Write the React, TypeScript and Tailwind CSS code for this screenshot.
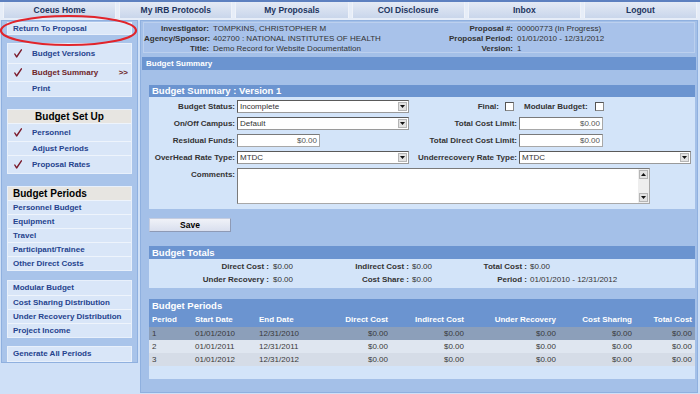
import React from "react";

const link = "text-[8px] font-bold text-[#25438e] leading-none whitespace-nowrap";

function Check() {
  return (
    <svg width="8" height="9" viewBox="0 0 8 9" className="shrink-0">
      <path d="M0.8 5 L2.6 8 L7.4 0.8" fill="none" stroke="#7a1a2b" strokeWidth="1.4" strokeLinecap="round" strokeLinejoin="round" />
    </svg>
  );
}

function Arrow({ up }: { up?: boolean }) {
  return (
    <div className="w-[9px] h-[9px] bg-[#e2e2e2] border border-[#b5b5b5] flex items-center justify-center shrink-0">
      <svg width="5" height="3" viewBox="0 0 5 3">
        <path d={up ? "M0 3 L2.5 0 L5 3 Z" : "M0 0 L5 0 L2.5 3 Z"} fill="#111" />
      </svg>
    </div>
  );
}

function Select({ value, w }: { value: string; w: string }) {
  return (
    <div className={`${w} h-[13px] bg-white border border-[#9a9a9a] border-t-[#5a5a5a] border-l-[#5a5a5a] flex items-center pl-[2px] pr-[1px]`}>
      <span className="flex-1 text-[8px] text-[#333] leading-none">{value}</span>
      <Arrow />
    </div>
  );
}

function Input({ w }: { w: string }) {
  return (
    <div className={`${w} h-[13px] bg-white border border-[#a8a8a8] border-t-[#7a7a7a] border-l-[#7a7a7a] flex items-center justify-end pr-[2px]`}>
      <span className="text-[8px] text-[#555] leading-none">$0.00</span>
    </div>
  );
}

function Box({ children, mt }: { children: React.ReactNode; mt: string }) {
  return <div className={`${mt} bg-[#d9e6f8] border border-[#e8f0fb] flex flex-col`}>{children}</div>;
}

function LRow({ label, h, check, active, arrow, plain }: { label: string; h: string; check?: boolean; active?: boolean; arrow?: boolean; plain?: boolean }) {
  return (
    <div className={`${h} flex items-center border-t border-[#eef4fc] first:border-t-0 ${plain ? "pl-[5px]" : "pl-[6px]"}`}>
      {!plain && <div className="w-[8px] shrink-0">{check && <Check />}</div>}
      <span className={`text-[8px] font-bold leading-none whitespace-nowrap ${plain ? "" : "ml-[10px]"} ${active ? "text-[#6e2528]" : "text-[#25438e]"}`}>{label}</span>
      {arrow && <span className="ml-auto mr-[3px] text-[8px] font-bold text-[#6e2528] leading-none">&gt;&gt;</span>}
    </div>
  );
}

const navItems = ["Coeus Home", "My IRB Protocols", "My Proposals", "COI Disclosure", "Inbox", "Logout"];

const lbl = "text-[8px] font-bold text-[#333] leading-none whitespace-nowrap";
const tl = "text-[8px] font-bold text-[#333] whitespace-nowrap text-right";

const periods = [
  ["1", "01/01/2010", "12/31/2010", "bg-[#8c9fba]"],
  ["2", "01/01/2011", "12/31/2011", "bg-[#dfe6f0]"],
  ["3", "01/01/2012", "12/31/2012", "bg-[#d5dce7]"],
];

const cols = "grid grid-cols-[43px_64px_64px_71px_76px_92px_76px_60px]";

export default function App() {
  return (
    <div className="relative w-[700px] h-[394px] overflow-hidden bg-[#cfe0f7] font-['Liberation_Sans',Arial,sans-serif] text-[#333]">
      {/* top nav */}
      <div className="h-[20px] flex gap-[3px] px-[3px] pb-[2px] bg-[#e6edf8] border-t-[2px] border-[#5d80bf]">
        {navItems.map((n) => (
          <div key={n} className="flex-1 h-[16px] flex items-center justify-center bg-gradient-to-b from-[#e4eaf5] to-[#c9d6eb] border-x border-[#eef2f9]">
            <span className="text-[8.5px] font-bold text-[#1d355f] leading-none">{n}</span>
          </div>
        ))}
      </div>

      <div className="flex items-start">
        {/* left panel */}
        <div className="ml-[1px] w-[137px] h-[343px] bg-[#a9c4ea] border border-[#8fb0df] px-[5px] pt-[1px] flex flex-col">
          <div className="h-[18px] bg-[#dce8f8] border border-[#e8f0fb] flex items-center pl-[5px]">
            <span className={link}>Return To Proposal</span>
          </div>
          <Box mt="mt-[8px]">
            <LRow label="Budget Versions" h="h-[19px]" check />
            <LRow label="Budget Summary" h="h-[18px]" check active arrow />
            <LRow label="Print" h="h-[15px]" />
          </Box>
          <Box mt="mt-[12px]">
            <div className="h-[13px] bg-[#e7e5e1] flex items-center justify-center">
              <span className="text-[10px] font-bold text-black leading-none">Budget Set Up</span>
            </div>
            <LRow label="Personnel" h="h-[18px]" check />
            <LRow label="Adjust Periods" h="h-[14px]" />
            <LRow label="Proposal Rates" h="h-[18px]" check />
          </Box>
          <Box mt="mt-[12px]">
            <div className="h-[13px] bg-[#e7e5e1] flex items-center pl-[5px]">
              <span className="text-[10px] font-bold text-black leading-none">Budget Periods</span>
            </div>
            {["Personnel Budget", "Equipment", "Travel", "Participant/Trainee", "Other Direct Costs"].map((t) => (
              <LRow key={t} label={t} h="h-[14px]" plain />
            ))}
          </Box>
          <Box mt="mt-[9px]">
            {["Modular Budget", "Cost Sharing Distribution", "Under Recovery Distribution", "Project Income"].map((t) => (
              <LRow key={t} label={t} h="h-[14px]" plain />
            ))}
          </Box>
          <Box mt="mt-[8px]">
            <LRow label="Generate All Periods" h="h-[14px]" plain />
          </Box>
        </div>

        {/* right panel */}
        <div className="ml-[2px] w-[558px] h-[373px] bg-[#a4c0e8] border border-[#8fb0df] pt-[1px] flex flex-col">
          <div className="mx-[2px] h-[31px] border border-[#bcd0ee] bg-[#a8c2ea] grid grid-cols-[65px_232px_64px_1fr] gap-x-[4px] content-start pt-[1px] text-[8px] leading-[10px]">
            <span className={tl}>Investigator:</span>
            <span className="whitespace-nowrap">TOMPKINS, CHRISTOPHER M</span>
            <span className={tl}>Proposal #:</span>
            <span className="whitespace-nowrap">00000773 (In Progress)</span>
            <span className={tl}>Agency/Sponsor:</span>
            <span className="whitespace-nowrap">402700 : NATIONAL INSTITUTES OF HEALTH</span>
            <span className={tl}>Proposal Period:</span>
            <span className="whitespace-nowrap">01/01/2010 - 12/31/2012</span>
            <span className={tl}>Title:</span>
            <span className="whitespace-nowrap">Demo Record for Website Documentation</span>
            <span className={tl}>Version:</span>
            <span className="whitespace-nowrap">1</span>
          </div>
          <div className="mt-[4px] mx-[1px] h-[13px] bg-[#6b94d0] flex items-center pl-[4px]">
            <span className="text-[8px] font-bold text-white leading-none">Budget Summary</span>
          </div>

          <div className="pl-[8px] pr-[2px] flex flex-col">
            {/* Budget Summary : Version 1 */}
            <div className="mt-[15px] flex flex-col">
              <div className="h-[12px] bg-[#6b94d0] flex items-center pl-[3px]">
                <span className="text-[9.5px] font-bold text-white leading-none">Budget Summary : Version 1</span>
              </div>
              <div className="bg-[#d3e4f9] pt-[3px] pb-[5px] grid grid-cols-[86px_172px_106px_1fr] gap-x-[2px] gap-y-[4px]">
                <span className={`${lbl} text-right self-center`}>Budget Status:</span>
                <Select value="Incomplete" w="w-[172px]" />
                <div className="flex items-center justify-end pr-[3px] gap-[6px]">
                  <span className={lbl}>Final:</span>
                  <div className="w-[9px] h-[9px] bg-white border border-[#8a8a8a] border-t-[#555] border-l-[#555]" />
                </div>
                <div className="flex items-center pl-[5px] gap-[7px]">
                  <span className={lbl}>Modular Budget:</span>
                  <div className="w-[9px] h-[9px] bg-white border border-[#8a8a8a] border-t-[#555] border-l-[#555]" />
                </div>

                <span className={`${lbl} text-right self-center`}>On/Off Campus:</span>
                <Select value="Default" w="w-[172px]" />
                <span className={`${lbl} text-right self-center`}>Total Cost Limit:</span>
                <Input w="w-[84px]" />

                <span className={`${lbl} text-right self-center`}>Residual Funds:</span>
                <Input w="w-[83px]" />
                <span className={`${lbl} text-right self-center`}>Total Direct Cost Limit:</span>
                <Input w="w-[84px]" />

                <span className={`${lbl} text-right self-center`}>OverHead Rate Type:</span>
                <Select value="MTDC" w="w-[172px]" />
                <span className={`${lbl} text-right self-center`}>Underrecovery Rate Type:</span>
                <Select value="MTDC" w="w-[172px]" />

                <span className={`${lbl} text-right pt-[3px]`}>Comments:</span>
                <div className="col-span-3 w-[413px] h-[36px] bg-white border border-[#a8a8a8] border-t-[#7a7a7a] border-l-[#7a7a7a] flex justify-end">
                  <div className="w-[11px] bg-[#eeeeee] flex flex-col justify-between items-center py-[1px]">
                    <Arrow up />
                    <Arrow />
                  </div>
                </div>
              </div>
            </div>

            {/* Save */}
            <div className="mt-[9px] w-[82px] h-[14px] bg-gradient-to-b from-[#f0f2f8] to-[#d9dfee] border border-[#c5cde0] border-r-[#8e9ab5] border-b-[#8e9ab5] flex items-center justify-center">
              <span className="text-[8.5px] font-bold text-black leading-none">Save</span>
            </div>

            {/* Budget Totals */}
            <div className="mt-[14px] flex flex-col">
              <div className="h-[13px] bg-[#6b94d0] flex items-center pl-[3px]">
                <span className="text-[9.5px] font-bold text-white leading-none">Budget Totals</span>
              </div>
              <div className="bg-[#d3e4f9] pt-[1px] pb-[2px] grid grid-cols-[120px_50px_90px_50px_68px_1fr] text-[8px] leading-[13px]">
                <span className={tl}>Direct Cost :</span>
                <span className="pl-[4px]">$0.00</span>
                <span className={tl}>Indirect Cost :</span>
                <span className="pl-[3px]">$0.00</span>
                <span className={tl}>Total Cost :</span>
                <span className="pl-[3px]">$0.00</span>
                <span className={tl}>Under Recovery :</span>
                <span className="pl-[4px]">$0.00</span>
                <span className={tl}>Cost Share :</span>
                <span className="pl-[3px]">$0.00</span>
                <span className={tl}>Period :</span>
                <span className="pl-[3px] whitespace-nowrap">01/01/2010 - 12/31/2012</span>
              </div>
            </div>

            {/* Budget Periods */}
            <div className="mt-[11px] flex flex-col">
              <div className="bg-[#6b94d0] flex flex-col">
                <div className="h-[14px] flex items-center pl-[3px]">
                  <span className="text-[9.5px] font-bold text-white leading-none">Budget Periods</span>
                </div>
                <div className={`${cols} h-[14px] items-center text-[8px] font-bold text-white leading-none`}>
                  <span className="pl-[3px]">Period</span>
                  <span className="pl-[3px]">Start Date</span>
                  <span className="pl-[3px]">End Date</span>
                  <span className="text-right pr-[3px]">Direct Cost</span>
                  <span className="text-right pr-[3px]">Indirect Cost</span>
                  <span className="text-right pr-[3px]">Under Recovery</span>
                  <span className="text-right pr-[3px]">Cost Sharing</span>
                  <span className="text-right pr-[3px]">Total Cost</span>
                </div>
              </div>
              {periods.map(([p, s, e, bg]) => (
                <div key={p} className={`${cols} ${bg} h-[13px] items-center text-[8px] text-[#3a3a3a] leading-none`}>
                  <span className="pl-[3px]">{p}</span>
                  <span className="pl-[3px]">{s}</span>
                  <span className="pl-[3px]">{e}</span>
                  <span className="text-right pr-[3px]">$0.00</span>
                  <span className="text-right pr-[3px]">$0.00</span>
                  <span className="text-right pr-[3px]">$0.00</span>
                  <span className="text-right pr-[3px]">$0.00</span>
                  <span className="text-right pr-[3px]">$0.00</span>
                </div>
              ))}
              <div className="h-[13px] bg-[#d3e4f9]" />
            </div>
          </div>
        </div>
      </div>

      {/* annotation ellipse */}
      <svg className="absolute left-0 top-0 pointer-events-none" width="700" height="394">
        <ellipse cx="68.5" cy="30.5" rx="67.5" ry="14.5" fill="none" stroke="#e1242b" strokeWidth="2.2" />
      </svg>
    </div>
  );
}
